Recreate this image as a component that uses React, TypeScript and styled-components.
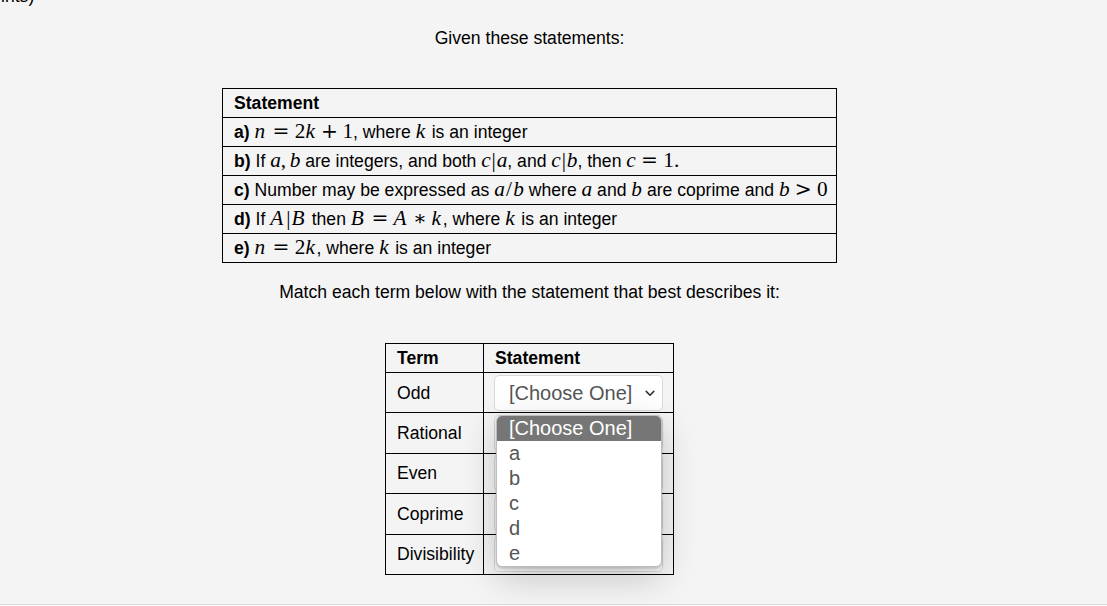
import React from "react";
import styled, { createGlobalStyle } from "styled-components";

const Global = createGlobalStyle`
  html, body { margin: 0; padding: 0; background: #f4f4f4; }
  body {
    font-family: "Liberation Sans", Arial, sans-serif;
    font-size: 17.6px;
    color: #000;
    overflow: hidden;
  }
`;

const Content = styled.main`
  display: flow-root;
  width: 1059px;
  text-align: center;
`;

const Stub = styled.div`
  margin-top: -14px;
  height: 20px;
  line-height: 20px;
  text-align: left;
  padding-left: 1px;
`;

const Para = styled.p<{ $top: number }>`
  margin: ${(p) => p.$top}px 0 0;
  line-height: 20px;
`;

const StatementTable = styled.table`
  margin: 40px auto 0;
  width: 615px;
  table-layout: fixed;
  border-collapse: collapse;
  text-align: left;
`;

const HeadCell = styled.th`
  border: 1px solid #000;
  padding: 0 11px;
  height: 28px;
  line-height: 20px;
  font-weight: bold;
  text-align: left;
  vertical-align: middle;
`;

const Cell = styled.td`
  border: 1px solid #000;
  padding: 0 10px 0 11px;
  height: 28px;
  line-height: 20px;
  vertical-align: middle;
  white-space: nowrap;
`;

const Tag = styled.b`
  font-weight: bold;
`;

const MathText = styled.span`
  font-family: "Liberation Serif", "Times New Roman", serif;
  font-size: 1.21em;
  line-height: 1;
  white-space: nowrap;
`;

const V = styled.span<{ $extra?: number }>`
  font-style: italic;
  margin-right: ${(p) => p.$extra ?? 0}em;
`;

const Op = styled.span<{ $kind: "rel" | "bin" }>`
  font-family: "DejaVu Serif", serif;
  font-size: 0.95em;
  margin: 0 ${(p) => (p.$kind === "rel" ? "0.26em" : "0.22em")};
`;

const Punct = styled.span`
  margin-right: 0.1667em;
`;

const Bar = styled.span`
  padding: 0 0.04em;
`;

const Slash = styled.span`
  padding: 0 0.06em;
`;

const TermTable = styled.table`
  margin: 41px auto 0;
  width: 289px;
  table-layout: fixed;
  border-collapse: collapse;
  text-align: left;
`;

const TermCol = styled.col`
  width: 98px;
`;

const TermCell = styled.td`
  border: 1px solid #000;
  padding: 0 11px;
  height: 39.4px;
  line-height: 20px;
  vertical-align: middle;
`;

const PickCell = styled.td`
  border: 1px solid #000;
  padding: 0 10px;
  height: 39.4px;
  vertical-align: middle;
`;

const SelectWrap = styled.div`
  position: relative;
  width: 169px;
  height: 36px;
`;

const Select = styled.select`
  appearance: none;
  -webkit-appearance: none;
  display: block;
  box-sizing: border-box;
  width: 100%;
  height: 100%;
  margin: 0;
  padding: 0 28px 0 14px;
  border: 1px solid #d9d9d9;
  border-radius: 5px;
  background: #fff;
  font-family: "Liberation Sans", Arial, sans-serif;
  font-size: 20px;
  color: #555;
  outline: none;
`;

const Chevron = styled.svg`
  position: absolute;
  right: 8px;
  top: 15px;
  pointer-events: none;
`;

const Listbox = styled.ul`
  position: absolute;
  top: 40px;
  left: 2px;
  z-index: 5;
  box-sizing: border-box;
  width: 166px;
  margin: 0;
  padding: 0;
  list-style: none;
  background: #fff;
  border: 1px solid #bdbdbd;
  border-radius: 6px;
  overflow: hidden;
  text-align: left;
  box-shadow: 0 2px 3px rgba(0, 0, 0, 0.18), 0 10px 36px rgba(0, 0, 0, 0.2);
`;

const Option = styled.li<{ $active?: boolean }>`
  height: 25px;
  line-height: 25px;
  padding: 0 12px;
  font-family: "Liberation Sans", Arial, sans-serif;
  font-size: 20px;
  color: ${(p) => (p.$active ? "#fff" : "#555")};
  background: ${(p) => (p.$active ? "#767676" : "transparent")};
`;

const Footer = styled.footer`
  margin-top: 29px;
  height: 20px;
  border-top: 1px solid #dcdcdc;
  background: #f9f9f9;
`;

const options = ["[Choose One]", "a", "b", "c", "d", "e"];
const terms = ["Odd", "Rational", "Even", "Coprime", "Divisibility"];

function ChevronIcon() {
  return (
    <Chevron width="10" height="7" viewBox="0 0 10 7" aria-hidden="true">
      <path d="M1.2 1.4 L5 5.2 L8.8 1.4" fill="none" stroke="#333" strokeWidth="1.6" strokeLinecap="round" strokeLinejoin="round" />
    </Chevron>
  );
}

function StatementSelect({ open }: { open?: boolean }) {
  return (
    <SelectWrap>
      <Select defaultValue="">
        {options.map((o, i) => (
          <option key={o} value={i === 0 ? "" : o}>
            {o}
          </option>
        ))}
      </Select>
      <ChevronIcon />
      {open && (
        <Listbox role="listbox">
          {options.map((o, i) => (
            <Option key={o} $active={i === 0}>
              {o}
            </Option>
          ))}
        </Listbox>
      )}
    </SelectWrap>
  );
}

export default function App() {
  return (
    <>
      <Global />
      <Content>
        <Stub>ints)</Stub>
        <Para $top={22}>Given these statements:</Para>
        <StatementTable>
          <thead>
            <tr>
              <HeadCell>Statement</HeadCell>
            </tr>
          </thead>
          <tbody>
            <tr>
              <Cell>
                <Tag>a)</Tag>{" "}
                <MathText>
                  <V $extra={0.1}>n</V>
                  <Op $kind="rel">=</Op>2<V $extra={0.08}>k</V>
                  <Op $kind="bin">+</Op>1
                </MathText>
                , where{" "}
                <MathText>
                  <V $extra={0.08}>k</V>
                </MathText>{" "}
                is an integer
              </Cell>
            </tr>
            <tr>
              <Cell>
                <Tag>b)</Tag> If{" "}
                <MathText>
                  <V>a</V>
                  <Punct>,</Punct>
                  <V>b</V>
                </MathText>{" "}
                are integers, and both{" "}
                <MathText>
                  <V>c</V>
                  <Bar>|</Bar>
                  <V>a</V>
                </MathText>
                , and{" "}
                <MathText>
                  <V>c</V>
                  <Bar>|</Bar>
                  <V>b</V>
                </MathText>
                , then{" "}
                <MathText>
                  <V>c</V>
                  <Op $kind="rel">=</Op>1.
                </MathText>
              </Cell>
            </tr>
            <tr>
              <Cell>
                <Tag>c)</Tag> Number may be expressed as{" "}
                <MathText>
                  <V>a</V>
                  <Slash>/</Slash>
                  <V>b</V>
                </MathText>{" "}
                where{" "}
                <MathText>
                  <V>a</V>
                </MathText>{" "}
                and{" "}
                <MathText>
                  <V>b</V>
                </MathText>{" "}
                are coprime and{" "}
                <MathText>
                  <V>b</V>
                  <Op $kind="rel">&gt;</Op>0
                </MathText>
              </Cell>
            </tr>
            <tr>
              <Cell>
                <Tag>d)</Tag> If{" "}
                <MathText>
                  <V $extra={0.11}>A</V>
                  <Bar>|</Bar>
                  <V $extra={0.11}>B</V>
                </MathText>{" "}
                then{" "}
                <MathText>
                  <V $extra={0.11}>B</V>
                  <Op $kind="rel">=</Op>
                  <V $extra={0.11}>A</V>
                  <Op $kind="bin">∗</Op>
                  <V $extra={0.08}>k</V>
                </MathText>
                , where{" "}
                <MathText>
                  <V $extra={0.08}>k</V>
                </MathText>{" "}
                is an integer
              </Cell>
            </tr>
            <tr>
              <Cell>
                <Tag>e)</Tag>{" "}
                <MathText>
                  <V $extra={0.1}>n</V>
                  <Op $kind="rel">=</Op>2<V $extra={0.08}>k</V>
                </MathText>
                , where{" "}
                <MathText>
                  <V $extra={0.08}>k</V>
                </MathText>{" "}
                is an integer
              </Cell>
            </tr>
          </tbody>
        </StatementTable>
        <Para $top={19}>Match each term below with the statement that best describes it:</Para>
        <TermTable>
          <colgroup>
            <TermCol />
            <col />
          </colgroup>
          <thead>
            <tr>
              <HeadCell>Term</HeadCell>
              <HeadCell>Statement</HeadCell>
            </tr>
          </thead>
          <tbody>
            {terms.map((t, i) => (
              <tr key={t}>
                <TermCell>{t}</TermCell>
                <PickCell>
                  <StatementSelect open={i === 0} />
                </PickCell>
              </tr>
            ))}
          </tbody>
        </TermTable>
      </Content>
      <Footer />
    </>
  );
}
